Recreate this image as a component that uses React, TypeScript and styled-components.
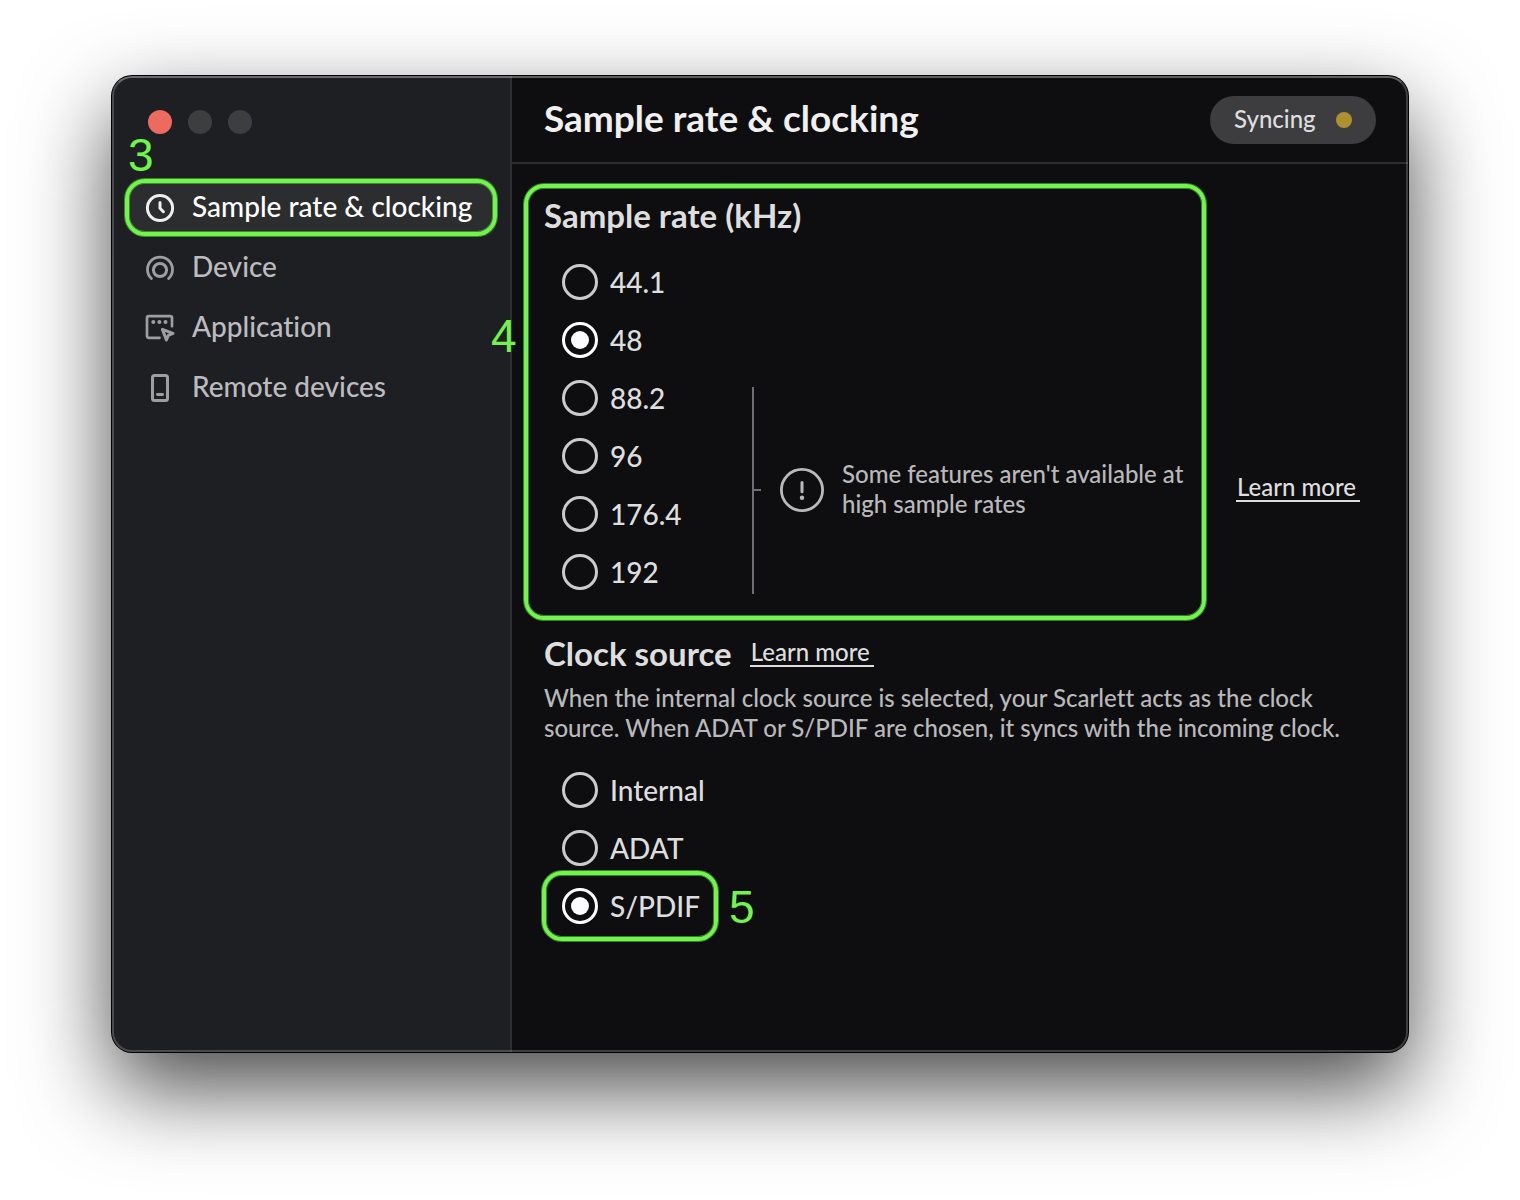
import React, { useState } from "react";
import styled, { createGlobalStyle, css } from "styled-components";

const color = {
  sidebar: "#1e1f23",
  main: "#0e0e10",
  line: "#2e2e31",
  selected: "#2c2d2f",
  heading: "#f0f0f0",
  text: "#dededf",
  muted: "#bcbcbf",
  note: "#b9b9bb",
  icon: "#9e9da3",
  green: "#70f64a",
  greenEdge: "rgba(90, 200, 60, 0.6)",
};

const GlobalStyle = createGlobalStyle`
  *, *::before, *::after { box-sizing: border-box; }
  body {
    margin: 0;
    background: #fff;
    font-family: Lato, "Open Sans", sans-serif;
    font-weight: 500;
    font-variant-ligatures: none;
    color: ${color.text};
  }
`;

const Desktop = styled.div`
  display: flex;
  min-height: 100vh;
  padding: 76px 112px 148px;
`;

const Window = styled.div`
  position: relative;
  display: flex;
  flex: 1;
  border-radius: 20px;
  background: ${color.main};
  box-shadow: 0 0 0 1px #000, 0 36px 88px rgba(0, 0, 0, 0.72);

  &::after {
    content: "";
    position: absolute;
    inset: 0;
    border: 2px solid rgba(255, 255, 255, 0.2);
    border-top-color: rgba(255, 255, 255, 0.34);
    border-radius: inherit;
    pointer-events: none;
  }
`;

const Sidebar = styled.aside`
  flex: none;
  width: 400px;
  padding: 34px 14px 16px 16px;
  border-right: 2px solid ${color.line};
  border-radius: 20px 0 0 20px;
  background: ${color.sidebar};
`;

const Lights = styled.div`
  display: flex;
  gap: 16px;
  padding-left: 20px;
  margin-bottom: 46px;
`;

const Light = styled.button<{ $fill: string }>`
  width: 24px;
  height: 24px;
  padding: 0;
  border: 0;
  border-radius: 50%;
  background: ${(p) => p.$fill};
`;

const Nav = styled.nav`
  display: flex;
  flex-direction: column;
  gap: 4px;
`;

const NavItem = styled.button<{ $active: boolean }>`
  position: relative;
  display: flex;
  align-items: center;
  gap: 16px;
  height: 56px;
  padding: 0 16px;
  border: 0;
  border-radius: 12px;
  background: ${(p) => (p.$active ? color.selected : "transparent")};
  color: ${(p) => (p.$active ? "#fff" : color.muted)};
  font: inherit;
  font-size: 28px;
  line-height: 36px;
  font-variant-ligatures: none;
  text-align: left;
  white-space: nowrap;

  svg {
    flex: none;
    color: ${(p) => (p.$active ? "#efefef" : color.icon)};
  }
`;

const NavText = styled.span`
  padding-bottom: 4px;
`;

const Callout = styled.span<{ $inset: string }>`
  position: absolute;
  inset: ${(p) => p.$inset};
  border: 4px solid ${color.green};
  border-radius: 20px;
  box-shadow: 0 0 0 1px ${color.greenEdge}, inset 0 0 0 1px ${color.greenEdge};
  pointer-events: none;
`;

const Step = styled.span<{ $left: string; $top: string }>`
  position: absolute;
  left: ${(p) => p.$left};
  top: ${(p) => p.$top};
  color: ${color.green};
  font: 46px/46px "Liberation Sans", Arial, sans-serif;
  pointer-events: none;
`;

const Main = styled.main`
  flex: 1;
  min-width: 0;
`;

const Header = styled.header`
  display: flex;
  align-items: center;
  justify-content: space-between;
  height: 88px;
  padding: 2px 32px 0;
  border-bottom: 2px solid ${color.line};
`;

const Title = styled.h1`
  margin: 0;
  padding-bottom: 4px;
  color: ${color.heading};
  font-size: 37px;
  line-height: 44px;
  font-weight: 700;
`;

const Status = styled.div`
  display: flex;
  align-items: center;
  justify-content: space-between;
  gap: 16px;
  min-width: 166px;
  height: 48px;
  padding: 0 24px;
  border-radius: 24px;
  background: #3d3d3f;
  font-size: 24px;
  line-height: 30px;
`;

const StatusText = styled.span`
  padding-bottom: 2px;
`;

const Dot = styled.span`
  width: 16px;
  height: 16px;
  border-radius: 50%;
  background: #ae9033;
`;

const Content = styled.div`
  display: flex;
  flex-direction: column;
  gap: 32px;
  padding: 31px 48px 32px 32px;
`;

const Heading = styled.h2`
  margin: 0;
  font-size: 33px;
  line-height: 40px;
  font-weight: 700;
`;

const RateSection = styled.section`
  display: flex;
  gap: 48px;
`;

const RateGroup = styled.div`
  position: relative;
  flex: 1;
`;

const RateRow = styled.div`
  display: flex;
  align-items: flex-end;
  margin-top: 18px;
`;

const Radios = styled.div`
  display: flex;
  flex-direction: column;
  flex: none;
  align-items: flex-start;
  min-width: 208px;
  padding-left: 18px;
`;

const RadioLabel = styled.label`
  position: relative;
  display: flex;
  align-items: center;
  gap: 12px;
  height: 58px;
  font-size: 28px;
  line-height: 36px;
`;

const RadioInput = styled.input`
  display: grid;
  place-content: center;
  width: 36px;
  height: 36px;
  margin: 0;
  border: 3px solid #cbcbcd;
  border-radius: 50%;
  appearance: none;

  &:checked {
    border-color: #fff;
  }

  &:checked::before {
    content: "";
    width: 18px;
    height: 18px;
    border-radius: 50%;
    background: #fcfcfd;
  }
`;

const HighRates = styled.div`
  display: flex;
  flex: 1;
  align-items: center;
  height: 207px;
  margin-bottom: 7px;
  padding-bottom: 1px;
  border-left: 2px solid #6f6e75;

  &::before {
    content: "";
    flex: none;
    width: 7px;
    height: 2px;
    margin-right: 19px;
    background: #6f6e75;
  }

  svg {
    flex: none;
    margin-right: 18px;
    color: ${color.note};
  }

  p {
    padding-bottom: 2px;
  }
`;

const textBlock = css`
  margin: 0;
  font-size: 24px;
  line-height: 30px;
`;

const Note = styled.p`
  ${textBlock}
  color: ${color.note};
`;

const Link = styled.a`
  ${textBlock}
  flex: none;
  min-width: 124px;
  height: 28px;
  padding: 0 1px;
  border-bottom: 2px solid currentColor;
  color: ${color.text};
  line-height: 26px;
  text-decoration: none;
`;

const RateLinkSlot = styled.div`
  display: flex;
  align-items: flex-end;
  padding-bottom: 99px;
`;

const HeadingRow = styled.div`
  display: flex;
  align-items: center;
  gap: 18px;
  margin-bottom: 10px;
`;

const ClockRadios = styled(Radios)`
  margin-top: 18px;
`;

const Svg = ({ size = 32, children }: { size?: number; children: React.ReactNode }) => (
  <svg
    width={size}
    height={size}
    viewBox={`0 0 ${size} ${size}`}
    fill="none"
    stroke="currentColor"
    strokeWidth="3"
    strokeLinecap="round"
    strokeLinejoin="round"
    aria-hidden="true"
  >
    {children}
  </svg>
);

const ClockIcon = () => (
  <Svg>
    <circle cx="16" cy="16" r="12.6" />
    <path d="M16 10.5v5.8l3.4 3.4" />
  </Svg>
);

const DeviceIcon = () => (
  <Svg>
    <path d="M7.4 26.6a12.5 12.5 0 1 1 17.2 0" strokeWidth="2.8" />
    <circle cx="16" cy="18" r="6.6" />
  </Svg>
);

const ApplicationIcon = () => (
  <Svg>
    <path d="M28 14.2V6a1.8 1.8 0 0 0-1.8-1.8H4.8A1.8 1.8 0 0 0 3 6v18a1.8 1.8 0 0 0 1.8 1.8h10.8" strokeWidth="2.7" />
    <g fill="currentColor" stroke="none">
      <circle cx="9.3" cy="10" r="2" />
      <circle cx="15.4" cy="10" r="2" />
      <circle cx="21.5" cy="10" r="2" />
    </g>
    <path d="M18.4 17.4l10.6 4-4.6 2-2 4.6z" strokeWidth="3" />
  </Svg>
);

const RemoteIcon = () => (
  <Svg>
    <rect x="8.5" y="3.5" width="15" height="25" rx="2" />
    <path d="M13.4 22.5h5.2" strokeWidth="2.8" />
  </Svg>
);

const AlertIcon = () => (
  <Svg size={44}>
    <circle cx="22" cy="22" r="20.6" strokeWidth="2.8" />
    <path d="M22 14.5v9.2" />
    <circle cx="22" cy="29.8" r="2.2" fill="currentColor" stroke="none" />
  </Svg>
);

const navItems = [
  { name: "Sample rate & clocking", Icon: ClockIcon },
  { name: "Device", Icon: DeviceIcon },
  { name: "Application", Icon: ApplicationIcon },
  { name: "Remote devices", Icon: RemoteIcon },
];

const rates = ["44.1", "48", "88.2", "96", "176.4", "192"];
const sources = ["Internal", "ADAT", "S/PDIF"];

export default function App() {
  const [rate, setRate] = useState("48");
  const [source, setSource] = useState("S/PDIF");

  return (
    <>
      <GlobalStyle />
      <Desktop>
        <Window>
          <Sidebar>
            <Lights>
              <Light $fill="#ed6a5e" aria-label="Close" />
              <Light $fill="#3d3e40" aria-label="Minimise" />
              <Light $fill="#3d3e40" aria-label="Zoom" />
            </Lights>
            <Nav>
              {navItems.map(({ name, Icon }, i) => (
                <NavItem key={name} type="button" $active={i === 0}>
                  <Icon />
                  <NavText>{name}</NavText>
                  {i === 0 && (
                    <>
                      <Callout $inset="-1px -1px 0 -3px" />
                      <Step $left="0px" $top="-48px">3</Step>
                    </>
                  )}
                </NavItem>
              ))}
            </Nav>
          </Sidebar>
          <Main>
            <Header>
              <Title>Sample rate &amp; clocking</Title>
              <Status role="status">
                <StatusText>Syncing</StatusText>
                <Dot />
              </Status>
            </Header>
            <Content>
              <RateSection>
                <RateGroup>
                  <Heading id="rate-heading">Sample rate (kHz)</Heading>
                  <RateRow>
                    <Radios role="radiogroup" aria-labelledby="rate-heading">
                      {rates.map((r) => (
                        <RadioLabel key={r}>
                          <RadioInput
                            type="radio"
                            name="rate"
                            value={r}
                            checked={rate === r}
                            onChange={() => setRate(r)}
                          />
                          {r}
                        </RadioLabel>
                      ))}
                    </Radios>
                    <HighRates>
                      <AlertIcon />
                      <Note>Some features aren't available at high sample rates</Note>
                    </HighRates>
                  </RateRow>
                  <Callout $inset="-11px -18px -19px -20px" />
                  <Step $left="-53px" $top="118px">4</Step>
                </RateGroup>
                <RateLinkSlot>
                  <Link href="#sample-rates">Learn more</Link>
                </RateLinkSlot>
              </RateSection>
              <section>
                <HeadingRow>
                  <Heading id="clock-heading">Clock source</Heading>
                  <Link href="#clock-source">Learn more</Link>
                </HeadingRow>
                <Note>
                  When the internal clock source is selected, your Scarlett acts as the clock
                  source. When ADAT or S/PDIF are chosen, it syncs with the incoming clock.
                </Note>
                <ClockRadios role="radiogroup" aria-labelledby="clock-heading">
                  {sources.map((s) => (
                    <RadioLabel key={s}>
                      <RadioInput
                        type="radio"
                        name="source"
                        value={s}
                        checked={source === s}
                        onChange={() => setSource(s)}
                      />
                      {s}
                      {s === "S/PDIF" && (
                        <>
                          <Callout $inset="-6px -18px -6px -20px" />
                          <Step $left="calc(100% + 29px)" $top="7px">5</Step>
                        </>
                      )}
                    </RadioLabel>
                  ))}
                </ClockRadios>
              </section>
            </Content>
          </Main>
        </Window>
      </Desktop>
    </>
  );
}
